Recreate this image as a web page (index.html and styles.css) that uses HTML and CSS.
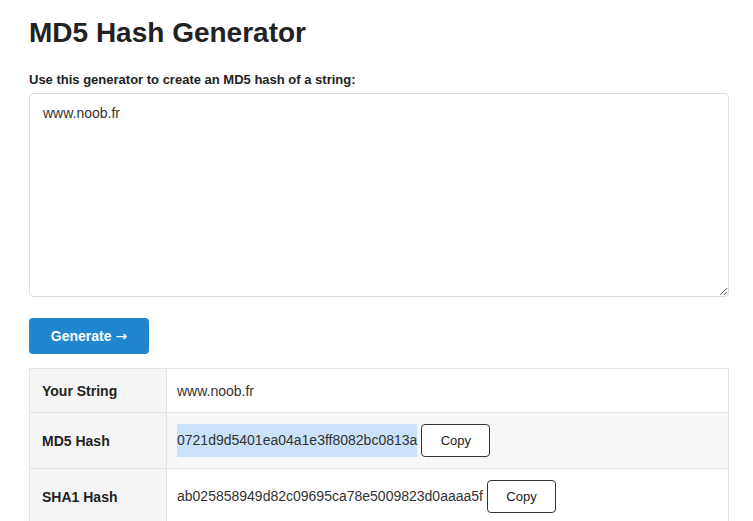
FILE: index.html
```html
<!DOCTYPE html>
<html>
<head>
<meta charset="utf-8">
<link rel="stylesheet" href="styles.css">
</head>
<body>
<main class="page">
  <h1 class="title">MD5 Hash Generator</h1>
  <label class="label" for="input">Use this generator to create an MD5 hash of a string:</label>
  <textarea id="input" class="input">www.noob.fr</textarea>
  <button class="generate">Generate <span class="arrow">→</span></button>
  <table class="results">
    <tr class="row">
      <th class="head">Your String</th>
      <td class="cell">www.noob.fr</td>
    </tr>
    <tr class="row alt">
      <th class="head">MD5 Hash</th>
      <td class="cell"><span class="hash selected">0721d9d5401ea04a1e3ff8082bc0813a</span><button class="copy">Copy</button></td>
    </tr>
    <tr class="row">
      <th class="head">SHA1 Hash</th>
      <td class="cell"><span class="hash">ab025858949d82c09695ca78e5009823d0aaaa5f</span><button class="copy">Copy</button></td>
    </tr>
  </table>
</main>
</body>
</html>
```

FILE: styles.css
```css
* { box-sizing: border-box; }
html, body { margin: 0; padding: 0; background: #fff; }
body {
  font-family: "Liberation Sans", Arial, sans-serif;
  color: #222;
}
.page {
  width: 700px;
  margin-left: 29px;
  padding-top: 14px;
  display: flex;
  flex-direction: column;
  align-items: flex-start;
}
.title {
  font-size: 28px;
  font-weight: bold;
  margin: 0;
  line-height: 38px;
  color: #222;
}
.label {
  display: block;
  font-size: 13px;
  font-weight: bold;
  margin-top: 20px;
  line-height: 16px;
  color: #222;
}
.input {
  display: block;
  width: 700px;
  height: 204px;
  margin-top: 5px;
  padding: 10px 13px;
  border: 1px solid #ddd;
  border-radius: 4px;
  font-family: "Liberation Sans", Arial, sans-serif;
  font-size: 14px;
  line-height: 18px;
  color: #333;
  resize: vertical;
}
.generate {
  margin-top: 21px;
  width: 120px;
  height: 36px;
  border: none;
  border-radius: 4px;
  background: #2185d0;
  color: #fff;
  font-family: "Liberation Sans", Arial, sans-serif;
  font-size: 14px;
  font-weight: bold;
  padding: 0;
}
.arrow {
  font-family: "DejaVu Sans", sans-serif;
  font-weight: normal;
}
.results {
  margin-top: 14px;
  width: 700px;
  border-collapse: collapse;
  border: 1px solid #e3e3e3;
  font-size: 14px;
}
.head {
  width: 137px;
  text-align: left;
  font-weight: bold;
  background: #f5f5f5;
  border: 1px solid #e3e3e3;
  padding: 0 12px;
  color: #222;
}
.cell {
  border: 1px solid #e3e3e3;
  padding: 0 10px;
  color: #333;
}
.row { height: 44px; }
.row:nth-child(2), .row:nth-child(3) { height: 56px; }
.alt .cell { background: #f7f7f7; }
.hash {
  display: inline-block;
  line-height: 33px;
  vertical-align: middle;
}
.selected { background: #cce2fb; }
.copy {
  vertical-align: middle;
  margin-left: 4px;
  width: 69px;
  height: 33px;
  background: #fff;
  border: 1px solid #333;
  border-radius: 4px;
  font-family: "Liberation Sans", Arial, sans-serif;
  font-size: 13px;
  color: #222;
  padding: 0;
}
```
